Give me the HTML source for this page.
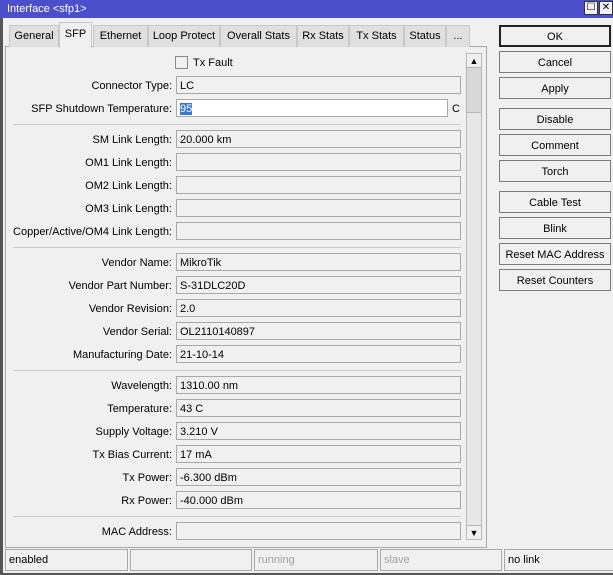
<!DOCTYPE html>
<html><head><style>
*{box-sizing:border-box;margin:0;padding:0}
body{width:613px;height:575px;background:#f0f0f0;font-family:"Liberation Sans",sans-serif;font-size:11px;color:#000;position:relative;overflow:hidden}
.a{position:absolute}
.title{left:0;top:0;width:613px;height:18px;background:#4b4fca;color:#fff;padding:3px 0 0 7px;font-size:11px}
.wb{top:1px;width:14px;height:14px;background:#f0f0f0;border:1px solid #333;font-size:10px;text-align:center;line-height:12px;color:#000}
.tab{top:25px;height:22px;border:1px solid #c8c8c8;border-bottom:none;background:#e0e0e0;text-align:center;line-height:21px}
.panel{left:5px;top:46px;width:482px;height:502px;border:1px solid #a8a8a8;background:#f0f0f0}
.lbl{right:441px;text-align:right;white-space:nowrap;height:20px;line-height:21px}
.f{left:176px;width:285px;height:18px;border:1px solid #a8a8a8;background:#f0f0f0;padding:0 3px;line-height:18px}
.sep{left:13px;width:448px;height:1px;background:#c8c8c8}
.btn{left:499px;width:112px;height:22px;border:1px solid #7a7a7a;background:#f0f0f0;text-align:center;line-height:22px}
.st{top:549px;height:22px;border:1px solid #a8a8a8;padding:0 3px;line-height:21px}
</style></head><body>
<div class="a" style="left:0;top:0;width:3px;height:575px;background:#555"></div>
<div class="a title">Interface &lt;sfp1&gt;</div>
<div class="a wb" style="left:584px">☐</div>
<div class="a wb" style="left:599px">✕</div>
<div class="a panel"></div>
<div class="a tab" style="left:9px;width:50px">General</div>
<div class="a tab" style="left:59px;width:33px;top:22px;height:26px;background:#f0f0f0;line-height:22px">SFP</div>
<div class="a tab" style="left:93px;width:55px">Ethernet</div>
<div class="a tab" style="left:148px;width:72px">Loop Protect</div>
<div class="a tab" style="left:220px;width:77px">Overall Stats</div>
<div class="a tab" style="left:297px;width:52px">Rx Stats</div>
<div class="a tab" style="left:349px;width:55px">Tx Stats</div>
<div class="a tab" style="left:404px;width:42px">Status</div>
<div class="a tab" style="left:446px;width:24px">...</div>

<div class="a" style="left:175px;top:56px;width:13px;height:13px;border:1px solid #888;background:#f0f0f0"></div>
<div class="a" style="left:193px;top:56px;line-height:14px">Tx Fault</div>

<div class="a lbl" style="top:76px">Connector Type:</div><div class="a f" style="top:76px">LC</div>
<div class="a lbl" style="top:99px">SFP Shutdown Temperature:</div><div class="a f" style="top:99px;width:272px;background:#fff"><span style="background:#3a78d0;color:#fff">95</span></div>
<div class="a" style="left:452px;top:99px;line-height:20px">C</div>
<div class="a sep" style="top:124px"></div>
<div class="a lbl" style="top:130px">SM Link Length:</div><div class="a f" style="top:130px">20.000 km</div>
<div class="a lbl" style="top:153px">OM1 Link Length:</div><div class="a f" style="top:153px"></div>
<div class="a lbl" style="top:176px">OM2 Link Length:</div><div class="a f" style="top:176px"></div>
<div class="a lbl" style="top:199px">OM3 Link Length:</div><div class="a f" style="top:199px"></div>
<div class="a lbl" style="top:222px">Copper/Active/OM4 Link Length:</div><div class="a f" style="top:222px"></div>
<div class="a sep" style="top:247px"></div>
<div class="a lbl" style="top:253px">Vendor Name:</div><div class="a f" style="top:253px">MikroTik</div>
<div class="a lbl" style="top:276px">Vendor Part Number:</div><div class="a f" style="top:276px">S-31DLC20D</div>
<div class="a lbl" style="top:299px">Vendor Revision:</div><div class="a f" style="top:299px">2.0</div>
<div class="a lbl" style="top:322px">Vendor Serial:</div><div class="a f" style="top:322px">OL2110140897</div>
<div class="a lbl" style="top:345px">Manufacturing Date:</div><div class="a f" style="top:345px">21-10-14</div>
<div class="a sep" style="top:370px"></div>
<div class="a lbl" style="top:376px">Wavelength:</div><div class="a f" style="top:376px">1310.00 nm</div>
<div class="a lbl" style="top:399px">Temperature:</div><div class="a f" style="top:399px">43 C</div>
<div class="a lbl" style="top:422px">Supply Voltage:</div><div class="a f" style="top:422px">3.210 V</div>
<div class="a lbl" style="top:445px">Tx Bias Current:</div><div class="a f" style="top:445px">17 mA</div>
<div class="a lbl" style="top:468px">Tx Power:</div><div class="a f" style="top:468px">-6.300 dBm</div>
<div class="a lbl" style="top:491px">Rx Power:</div><div class="a f" style="top:491px">-40.000 dBm</div>
<div class="a sep" style="top:516px"></div>
<div class="a lbl" style="top:522px">MAC Address:</div><div class="a f" style="top:522px"></div>

<div class="a" style="left:466px;top:53px;width:16px;height:487px;background:#e8e8e8;border:1px solid #b8b8b8"></div>
<div class="a" style="left:467px;top:54px;width:14px;height:14px;background:#f0f0f0;border-bottom:1px solid #b8b8b8;font-size:9px;text-align:center;line-height:14px">▲</div>
<div class="a" style="left:467px;top:68px;width:14px;height:45px;background:#d8d8d8;border-bottom:1px solid #b8b8b8"></div>
<div class="a" style="left:467px;top:525px;width:14px;height:14px;background:#f0f0f0;border-top:1px solid #b8b8b8;font-size:9px;text-align:center;line-height:14px">▼</div>

<div class="a btn" style="top:25px;border:2px solid #222;line-height:20px">OK</div>
<div class="a btn" style="top:51px">Cancel</div>
<div class="a btn" style="top:77px">Apply</div>
<div class="a btn" style="top:108px">Disable</div>
<div class="a btn" style="top:134px">Comment</div>
<div class="a btn" style="top:160px">Torch</div>
<div class="a btn" style="top:191px">Cable Test</div>
<div class="a btn" style="top:217px">Blink</div>
<div class="a btn" style="top:243px">Reset MAC Address</div>
<div class="a btn" style="top:269px">Reset Counters</div>

<div class="a st" style="left:5px;width:123px">enabled</div>
<div class="a st" style="left:130px;width:122px"></div>
<div class="a st" style="left:254px;width:124px;color:#a0a0a0">running</div>
<div class="a st" style="left:380px;width:122px;color:#a0a0a0">slave</div>
<div class="a st" style="left:504px;width:112px">no link</div>
<div class="a" style="left:0;top:573px;width:613px;height:2px;background:#555"></div>
</body></html>
